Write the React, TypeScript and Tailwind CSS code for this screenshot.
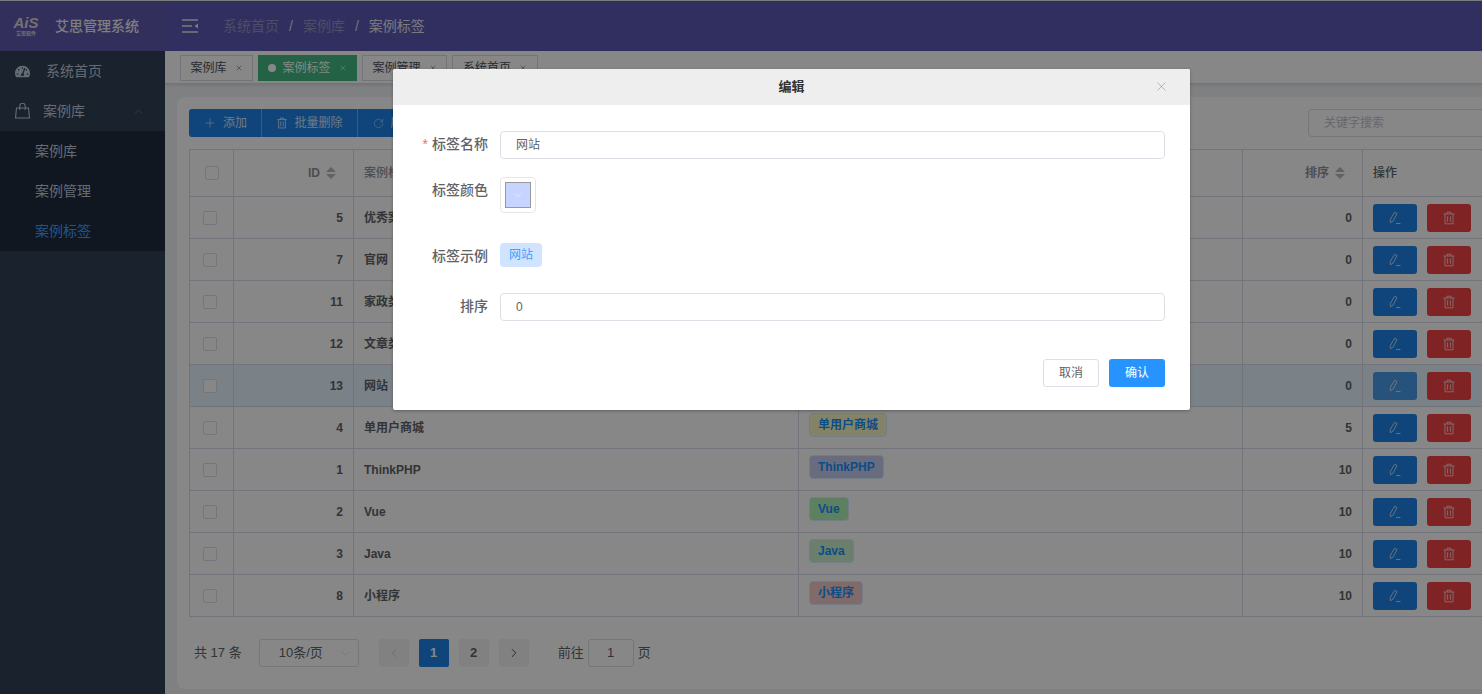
import React from "react";
import { ChevronDown, ChevronLeft, ChevronRight, ChevronUp, Plus, RotateCw, X } from "lucide-react";
import { FaTachometerAlt } from "react-icons/fa";

const FONT = { fontFamily: '"Liberation Sans", "Noto Sans CJK SC", sans-serif' };

const rows = [
  { id: 5, name: "优秀案例", color: "bg-[#f3f3e0]" },
  { id: 7, name: "官网", color: "bg-[#e0f0ff]" },
  { id: 11, name: "家政类", color: "bg-[#e0f0ff]" },
  { id: 12, name: "文章类", color: "bg-[#e0f0ff]" },
  { id: 13, name: "网站", color: "bg-[#c6d4ff]", active: true },
  { id: 4, name: "单用户商城", sort: 5, color: "bg-[#fbf7c2]" },
  { id: 1, name: "ThinkPHP", sort: 10, color: "bg-[#c6ccee]" },
  { id: 2, name: "Vue", sort: 10, color: "bg-[#b0f2b6]" },
  { id: 3, name: "Java", sort: 10, color: "bg-[#c8f0cc]" },
  { id: 8, name: "小程序", sort: 10, color: "bg-[#f2c8c8]" },
];

const TrashIcon = ({ className }: { className?: string }) => (
  <svg viewBox="0 0 14 14" className={className} fill="none" stroke="currentColor" strokeWidth="1">
    <path d="M1.5 3h11M5 3V1.2h4V3M3 3v9.8h8V3M5.6 5.2v5.6M8.4 5.2v5.6" />
  </svg>
);

const EditIcon = ({ className }: { className?: string }) => (
  <svg viewBox="0 0 14 14" className={className} fill="none" stroke="currentColor" strokeWidth="1">
    <path d="M6.6 1.2 9 2.6 5 10.2l-2.6 1.6-.2-3zM8 12.5h4.5" />
  </svg>
);

const SortCaret = () => (
  <span className="flex flex-col gap-[2px] ml-[6px]">
    <span className="w-0 h-0 border-x-[5px] border-x-transparent border-b-[5px] border-b-[#b4b7bf]"></span>
    <span className="w-0 h-0 border-x-[5px] border-x-transparent border-t-[5px] border-t-[#b4b7bf]"></span>
  </span>
);

const Tab = ({ label, active, w }: { label: string; active?: boolean; w: string }) => (
  <div
    className={`h-[26px] flex items-center justify-center gap-[6px] text-xs border ${w} ${
      active ? "bg-[#42b983] border-[#42b983] text-white" : "bg-white border-[#d8dce5] text-[#495060]"
    }`}
  >
    {active && <span className="w-2 h-2 rounded-full bg-white"></span>}
    <span>{label}</span>
    <X size={8} strokeWidth={1.5} className="ml-[2px]" />
  </div>
);

const cell = "border-r border-b border-[#d9dce8] flex items-center";

const Row = ({ row }: { row: (typeof rows)[number] }) => (
  <div
    className={`grid grid-cols-[45px_120px_445px_444px_120px_130px] h-[42px] text-xs text-[#606266] font-bold ${
      row.active ? "bg-[#e6f6ff]" : ""
    }`}
  >
    <div className={`${cell} border-l pl-[13px]`}>
      <span className="w-[14px] h-[14px] border border-[#dcdfe6] rounded-[2px] bg-white"></span>
    </div>
    <div className={`${cell} justify-end pr-[10px]`}>{row.id}</div>
    <div className={`${cell} pl-[10px]`}>{row.name}</div>
    <div className={`${cell} pl-[10px] !items-start pt-[6px]`}>
      <span className={`h-6 px-[8px] leading-[22px] rounded-[4px] border border-[#d9ecff] text-[#1890ff] ${row.color}`}>
        {row.name}
      </span>
    </div>
    <div className={`${cell} justify-end pr-[10px]`}>{row.sort ?? 0}</div>
    <div className={`${cell} pl-[10px] gap-[10px]`}>
      <span
        className={`w-11 h-7 rounded-[3px] flex items-center justify-center text-white ${
          row.active ? "bg-[#4a9ce8]" : "bg-[#1d82e8]"
        }`}
      >
        <EditIcon className="w-[14px] h-[14px] opacity-70" />
      </span>
      <span className="w-11 h-7 rounded-[3px] bg-[#f04347] flex items-center justify-center text-white">
        <TrashIcon className="w-[14px] h-[14px] opacity-70" />
      </span>
    </div>
  </div>
);

const FormRow = ({ label, required, children, className }: { label: string; required?: boolean; children: React.ReactNode; className?: string }) => (
  <div className={`flex ${className ?? ""}`}>
    <label className="w-[95px] shrink-0 text-right text-sm text-[#606266] font-medium leading-[26px]">
      {required && <span className="text-[#f56c6c] mr-1">*</span>}
      {label}
    </label>
    <div className="ml-3 flex-1">{children}</div>
  </div>
);

const App = () => {
  return (
    <div className="relative w-[1482px] h-[694px] overflow-hidden flex flex-col bg-[#f0f2f5]" style={FONT}>
      {/* header */}
      <header className="h-[51px] shrink-0 flex text-white border-t border-[#e8e8e8]">
        <div className="w-[165px] shrink-0 bg-[#615ab0] flex items-center pl-[13px] gap-4">
          <div className="w-[26px] flex flex-col items-center text-[#d8d8d8] leading-none">
            <span className="italic font-bold text-[15px] leading-[14px]">AiS</span>
            <span className="text-[5px] font-bold leading-[7px] whitespace-nowrap">艾思软件</span>
          </div>
          <span className="text-sm font-medium text-[#eeeeee]">艾思管理系统</span>
        </div>
        <div className="flex-1 bg-[#5c5ab6] flex items-center pl-[17px]">
          <svg viewBox="0 0 16 14" className="w-4 h-[14px] text-[#e8e8e8]" fill="none" stroke="currentColor" strokeWidth="1.3">
            <path d="M0 1h16M0 7h10M0 13h16" />
            <path d="M16 4.5v5L12.5 7z" fill="currentColor" stroke="none" />
          </svg>
          <div className="ml-[25px] flex items-center text-sm text-[#97a8be]">
            <span className="text-[#9392c0]">系统首页</span>
            <span className="mx-[10px] text-[#d8d8e8]">/</span>
            <span className="text-[#9392c0]">案例库</span>
            <span className="mx-[10px] text-[#d8d8e8]">/</span>
            <span className="text-[#e4e4f0]">案例标签</span>
          </div>
        </div>
      </header>

      <div className="flex-1 flex min-h-0">
        {/* sidebar */}
        <aside className="w-[165px] shrink-0 bg-[#304156] text-sm text-[#bfcbd9]">
          <div className="h-10 flex items-center pl-[15px]">
            <FaTachometerAlt size={15} className="text-[#bfcbd9]" />
            <span className="ml-4">系统首页</span>
          </div>
          <div className="h-10 flex items-center pl-[15px] relative">
            <svg viewBox="0 0 15 16" className="w-[15px] h-4" fill="none" stroke="currentColor" strokeWidth="1.1">
              <path d="M1.5 5h12l1 10H.5zM4.8 7V3a2.7 2.7 0 0 1 5.4 0v4" />
            </svg>
            <span className="ml-[13px]">案例库</span>
            <ChevronUp size={13} strokeWidth={1} className="ml-auto mr-[20px] text-[#8593a5]" />
          </div>
          <div className="bg-[#1f2d3d]">
            <div className="h-10 flex items-center pl-[35px]">案例库</div>
            <div className="h-10 flex items-center pl-[35px]">案例管理</div>
            <div className="h-10 flex items-center pl-[35px] text-[#409eff]">案例标签</div>
          </div>
        </aside>

        {/* main */}
        <main className="flex-1 min-w-0 overflow-hidden">
          <div className="h-[33px] bg-white border-b border-[#d8dce5] shadow-[0_1px_3px_rgba(0,0,0,0.12)] flex items-start pt-1 pl-[15px] gap-[5px]">
            <Tab label="案例库" w="w-[73px]" />
            <Tab label="案例标签" active w="w-[99px]" />
            <Tab label="案例管理" w="w-[85px]" />
            <Tab label="系统首页" w="w-[86px]" />
          </div>

          <section className="mt-[13px] ml-3 w-[1340px] h-[592px] bg-white rounded-lg pt-3 pl-3">
            <div className="flex h-7 text-xs">
              <div className="flex h-7 bg-[#1d82e8] text-[#d0e6fb] rounded-[3px] divide-x divide-[#6db0f2]">
                <span className="w-[73px] flex items-center justify-center gap-[6px]">
                  <Plus size={14} strokeWidth={1.2} />
                  添加
                </span>
                <span className="w-[96px] flex items-center justify-center gap-[6px]">
                  <TrashIcon className="w-3 h-3" />
                  批量删除
                </span>
                <span className="w-[72px] flex items-center justify-center gap-[6px]">
                  <RotateCw size={11} strokeWidth={1.2} />
                  刷新
                </span>
              </div>
              <div className="ml-[878px] w-[200px] h-7 border border-[#dcdfe6] rounded-[4px] flex items-center pl-[15px] text-[#c0c4cc] bg-white">
                关键字搜索
              </div>
            </div>

            <div className="mt-3">
              <div className="grid grid-cols-[45px_120px_445px_444px_120px_130px] h-[48px] text-xs text-[#909399] font-bold border-t border-[#d9dce8]">
                <div className={`${cell} border-l pl-[15px]`}>
                  <span className="w-[14px] h-[14px] border border-[#dcdfe6] rounded-[2px] bg-white"></span>
                </div>
                <div className={`${cell} justify-end pr-[17px]`}>
                  ID
                  <SortCaret />
                </div>
                <div className={`${cell} pl-[10px] font-medium`}>案例标签名称</div>
                <div className={`${cell} pl-[10px] font-medium`}>标签示例</div>
                <div className={`${cell} justify-end pr-[17px]`}>
                  排序
                  <SortCaret />
                </div>
                <div className={`${cell} pl-[10px] font-medium text-[#606266]`}>操作</div>
              </div>
              {rows.map((row) => (
                <Row key={row.id} row={row} />
              ))}
            </div>

            {/* pagination */}
            <div className="mt-[22px] flex items-center h-7 pl-[5px] text-[13px] text-[#606266]">
              <span>共 17 条</span>
              <div className="ml-[17px] w-[100px] h-7 border border-[#dcdfe6] rounded-[3px] flex items-center justify-between pl-[19px] pr-[6px]">
                <span>10条/页</span>
                <ChevronDown size={13} strokeWidth={1} className="text-[#c0c4cc]" />
              </div>
              <span className="ml-5 w-[30px] h-7 rounded-[2px] bg-[#f4f4f5] flex items-center justify-center text-[#c0c4cc]">
                <ChevronLeft size={14} strokeWidth={1.5} />
              </span>
              <span className="ml-[10px] w-[30px] h-7 rounded-[2px] bg-[#1d82e8] flex items-center justify-center text-white font-bold">1</span>
              <span className="ml-[10px] w-[30px] h-7 rounded-[2px] bg-[#f4f4f5] flex items-center justify-center font-bold">2</span>
              <span className="ml-[10px] w-[30px] h-7 rounded-[2px] bg-[#f4f4f5] flex items-center justify-center text-[#303133]">
                <ChevronRight size={14} strokeWidth={1.5} />
              </span>
              <span className="ml-[29px]">前往</span>
              <span className="ml-[4px] w-[46px] h-7 border border-[#dcdfe6] rounded-[3px] flex items-center justify-center">1</span>
              <span className="ml-[4px]">页</span>
            </div>
          </section>
        </main>
      </div>

      {/* modal mask */}
      <div className="absolute inset-0 bg-black/47"></div>

      {/* modal */}
      <div className="absolute left-[393px] top-[69px] w-[797px] h-[341px] bg-white rounded-[2px] shadow-[0_1px_3px_rgba(0,0,0,0.3)] overflow-hidden">
        <div className="relative h-9 bg-[#eeeeee] flex items-center justify-center text-[13px] font-bold text-[#303133]">
          编辑
          <X size={15} strokeWidth={1} className="absolute right-[21px] top-[10px] text-[#909399]" />
        </div>
        <div className="pt-[26px] pr-[25px] text-xs text-[#606266]">
          <FormRow label="标签名称" required>
            <div className="h-7 border border-[#dcdfe6] rounded-[4px] flex items-center pl-[15px]">网站</div>
          </FormRow>
          <FormRow label="标签颜色" className="mt-[18px]">
            <div className="w-9 h-9 border border-[#e6e6e6] rounded-[4px] p-1">
              <div className="w-full h-full border border-[#999999] bg-[#c6d4ff] flex items-center justify-center">
                <ChevronDown size={12} strokeWidth={1} className="text-white" />
              </div>
            </div>
          </FormRow>
          <FormRow label="标签示例" className="mt-[30px]">
            <span className="inline-block w-[42px] h-6 leading-6 text-center rounded-[4px] bg-[#d0e4ff] text-[#409eff]">网站</span>
          </FormRow>
          <FormRow label="排序" className="mt-6">
            <div className="h-7 border border-[#dcdfe6] rounded-[4px] flex items-center pl-[15px]">0</div>
          </FormRow>
          <div className="mt-[38px] flex justify-end gap-[10px]">
            <button className="w-14 h-7 border border-[#dcdfe6] rounded-[3px] bg-white text-[#606266]">取消</button>
            <button className="w-14 h-7 rounded-[3px] bg-[#2693ff] text-white">确认</button>
          </div>
        </div>
      </div>
    </div>
  );
};

export default App;
